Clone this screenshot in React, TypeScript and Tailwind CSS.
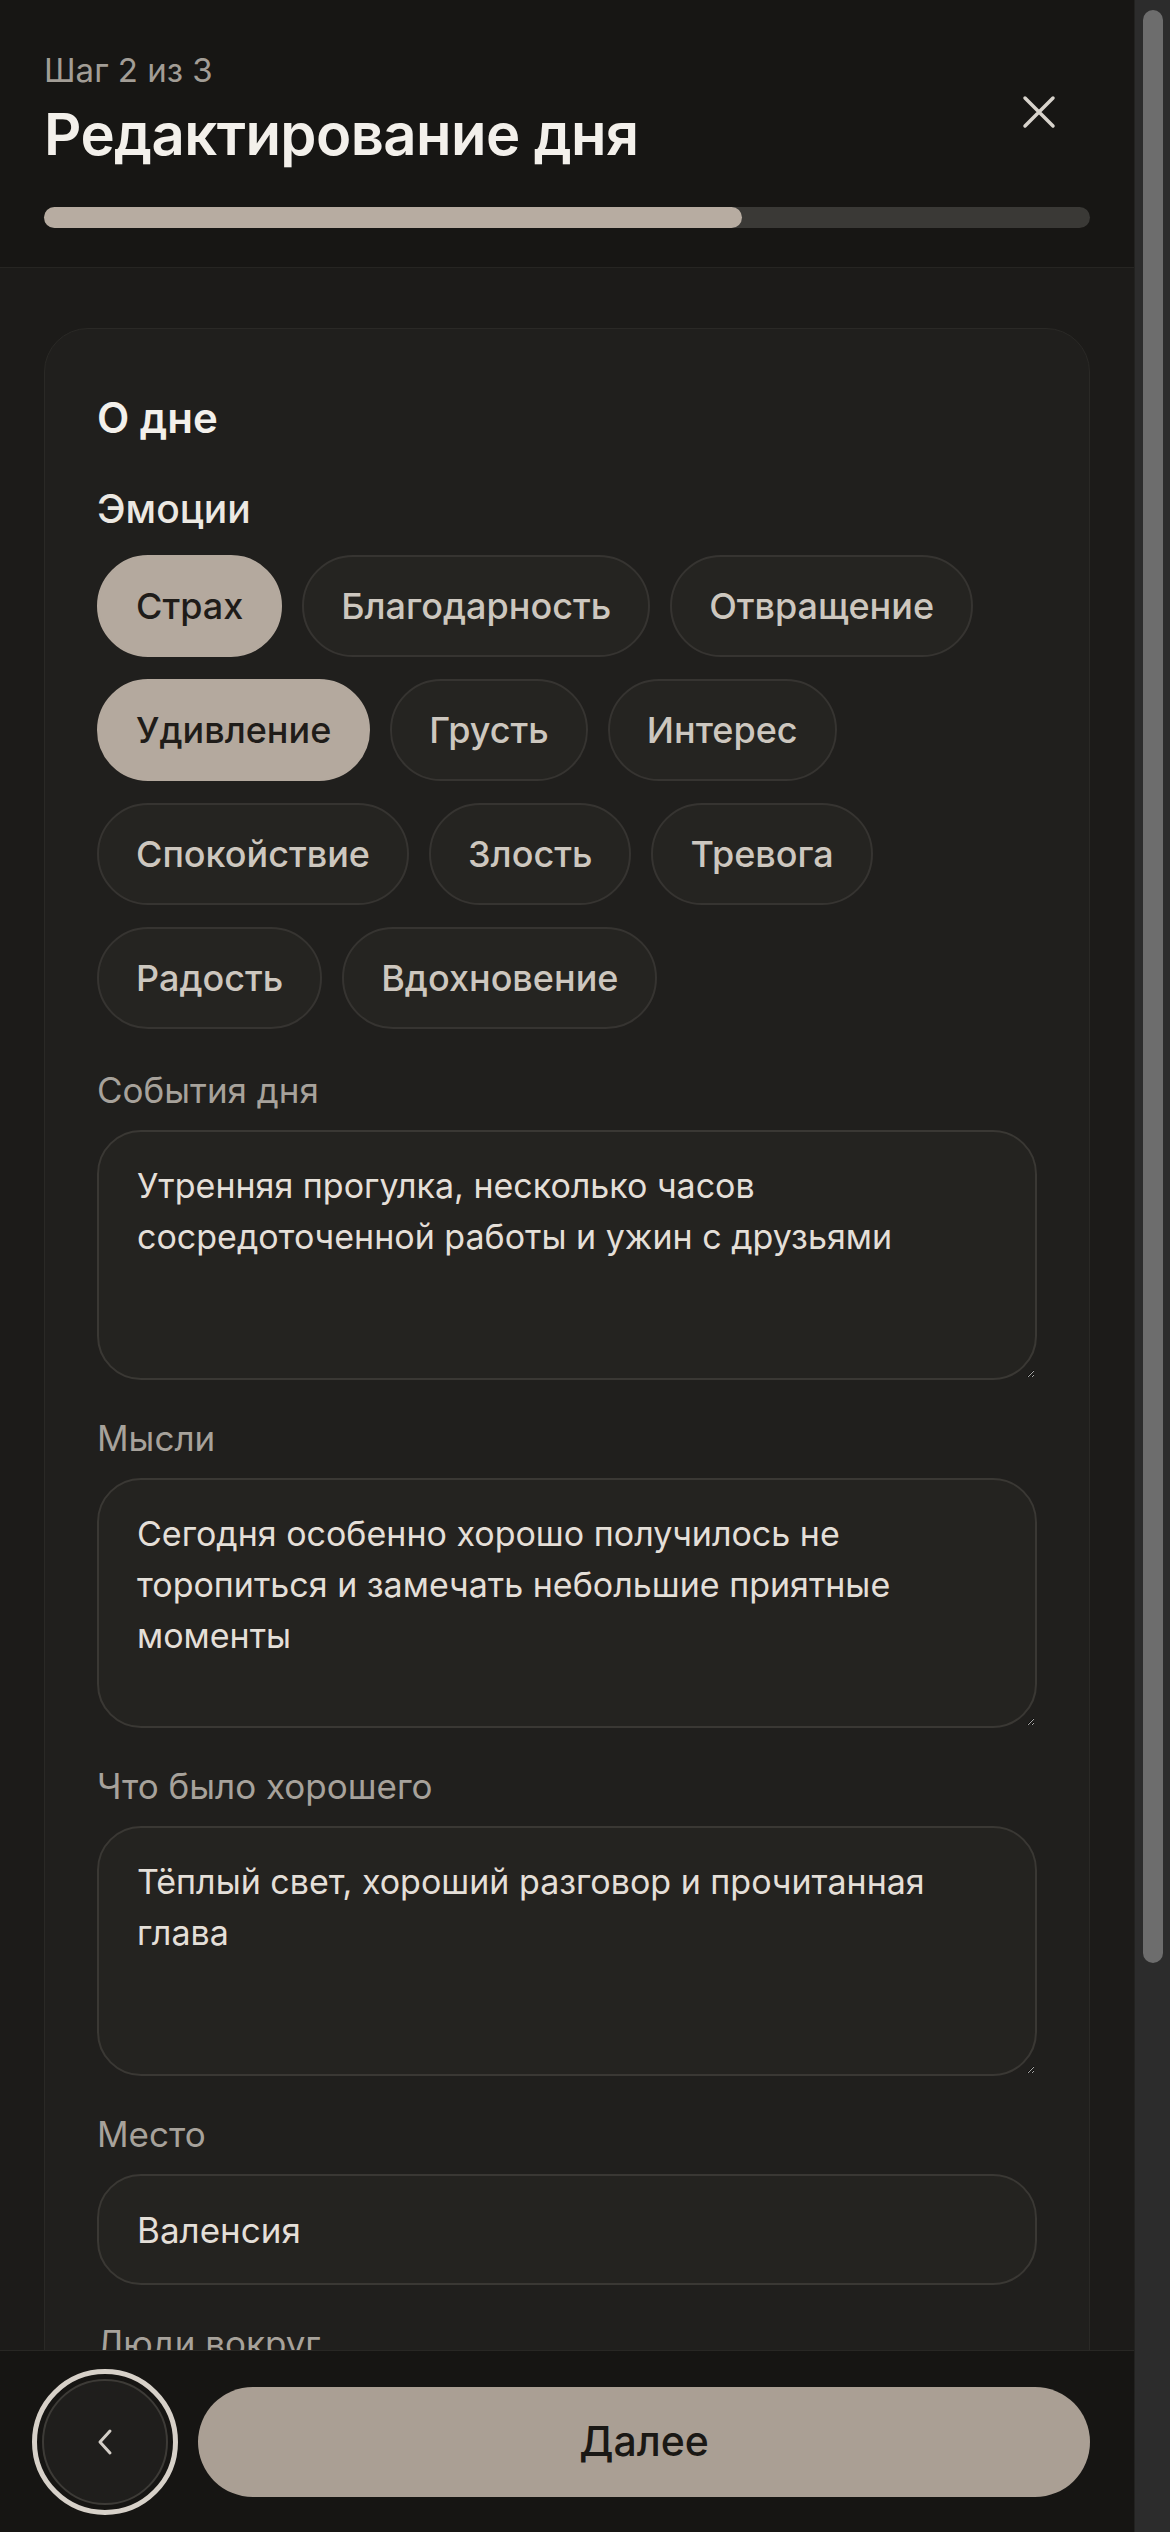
import React from 'react';

const emotions = [
  { label: 'Страх', active: true },
  { label: 'Благодарность', active: false },
  { label: 'Отвращение', active: false },
  { label: 'Удивление', active: true },
  { label: 'Грусть', active: false },
  { label: 'Интерес', active: false },
  { label: 'Спокойствие', active: false },
  { label: 'Злость', active: false },
  { label: 'Тревога', active: false },
  { label: 'Радость', active: false },
  { label: 'Вдохновение', active: false },
];

const fields = [
  { label: 'События дня', value: 'Утренняя прогулка, несколько часов сосредоточенной работы и ужин с друзьями' },
  { label: 'Мысли', value: 'Сегодня особенно хорошо получилось не торопиться и замечать небольшие приятные моменты' },
  { label: 'Что было хорошего', value: 'Тёплый свет, хороший разговор и прочитанная глава' },
];

const Label: React.FC<{ children: React.ReactNode }> = ({ children }) => (
  <div className="mb-[19px] text-[35px] leading-[42px] text-[#a7a29b]">{children}</div>
);

export default function App() {
  return (
    <div className="flex h-[2532px] w-[1170px] overflow-hidden bg-[#1c1b19] font-[Inter,'Noto_Sans',sans-serif]">
      <div className="flex w-[1134px] flex-col">
        {/* header */}
        <header className="h-[268px] shrink-0 border-b border-[#262522] bg-[#171614] px-[44px] pt-[50px]">
          <div className="flex items-start justify-between">
            <div>
              <div className="text-[33px] leading-[40px] text-[#a29d96]">Шаг 2 из 3</div>
              <h1 className="mt-[12px] text-[58px] font-semibold leading-[64px] tracking-[-0.01em] text-[#f3f0eb]">
                Редактирование дня
              </h1>
            </div>
            <button className="mr-[34px] mt-[45px] text-[#d8d3cc]">
              <svg width="34" height="34" viewBox="0 0 34 34" fill="none" stroke="currentColor" strokeWidth="3.5" strokeLinecap="round">
                <path d="M3 3 31 31M31 3 3 31" />
              </svg>
            </button>
          </div>
          <div className="mt-[41px] h-[21px] rounded-full bg-[#3a3936]">
            <div className="h-full w-[66.7%] rounded-full bg-[#b7aca1]" />
          </div>
        </header>

        {/* content */}
        <main className="flex-1 overflow-hidden px-[44px] pt-[60px]">
          <section className="rounded-[44px] border border-[#2a2926] bg-[#201f1d] px-[52px] pb-[60px] pt-[65px]">
            <h2 className="text-[42px] font-semibold leading-[48px] text-[#f3f0eb]">О дне</h2>
            <div className="mt-[44px] text-[39px] font-medium leading-[46px] text-[#ece8e2]">Эмоции</div>
            <div className="mt-[23px] flex flex-wrap gap-x-[20px] gap-y-[22px]">
              {emotions.map((e) => (
                <button
                  key={e.label}
                  className={
                    e.active
                      ? 'flex h-[102px] items-center rounded-full border-2 border-[#b4a99e] bg-[#b4a99e] px-[37px] text-[36px] font-medium text-[#1f1c19]'
                      : 'flex h-[102px] items-center rounded-full border-2 border-[#363431] bg-[#252421] px-[37px] text-[36px] font-medium text-[#cdc7bf]'
                  }
                >
                  {e.label}
                </button>
              ))}
            </div>

            <div className="mt-[40px] flex flex-col gap-[37px]">
              {fields.map((f) => (
                <div key={f.label}>
                  <Label>{f.label}</Label>
                  <textarea
                    readOnly
                    defaultValue={f.value}
                    className="block h-[250px] w-full resize-y rounded-[44px] border-2 border-[#3a3834] bg-[#242320] px-[38px] pt-[28px] text-[34px] leading-[51px] text-[#e4dfd8] outline-none"
                  />
                </div>
              ))}
              <div>
                <Label>Место</Label>
                <input
                  readOnly
                  defaultValue="Валенсия"
                  className="block h-[111px] w-full rounded-[44px] border-2 border-[#3a3834] bg-[#242320] px-[38px] text-[35px] text-[#e4dfd8] outline-none"
                />
              </div>
              <div>
                <Label>Люди вокруг</Label>
                <input
                  readOnly
                  defaultValue=""
                  className="block h-[111px] w-full rounded-[44px] border-2 border-[#3a3834] bg-[#242320] px-[38px] text-[35px] text-[#e4dfd8] outline-none"
                />
              </div>
            </div>
          </section>
        </main>

        {/* footer */}
        <footer className="flex h-[182px] shrink-0 items-center gap-[20px] border-t border-[#282724] bg-[#161513] pl-[32px] pr-[44px]">
          <div className="h-[146px] w-[146px] shrink-0 rounded-full border-[5px] border-[#d7d1c9] p-[5px]">
            <button className="flex h-full w-full items-center justify-center rounded-full border-2 border-[#3d3b37] bg-[#1f1e1c] text-[#d3cec7]">
              <svg width="20" height="28" viewBox="0 0 20 28" fill="none" stroke="currentColor" strokeWidth="3" strokeLinecap="round" strokeLinejoin="round">
                <path d="M15 3 5 14l10 11" />
              </svg>
            </button>
          </div>
          <button className="h-[110px] flex-1 rounded-full bg-[#aa9f94] text-[41px] font-medium text-[#1a1815]">Далее</button>
        </footer>
      </div>

      {/* scrollbar */}
      <div className="w-[36px] shrink-0 border-l border-[#222220] bg-[#2c2c2c] pl-[8px] pt-[10px]">
        <div className="h-[1953px] w-[20px] rounded-full bg-[#6d6d6d]" />
      </div>
    </div>
  );
}
